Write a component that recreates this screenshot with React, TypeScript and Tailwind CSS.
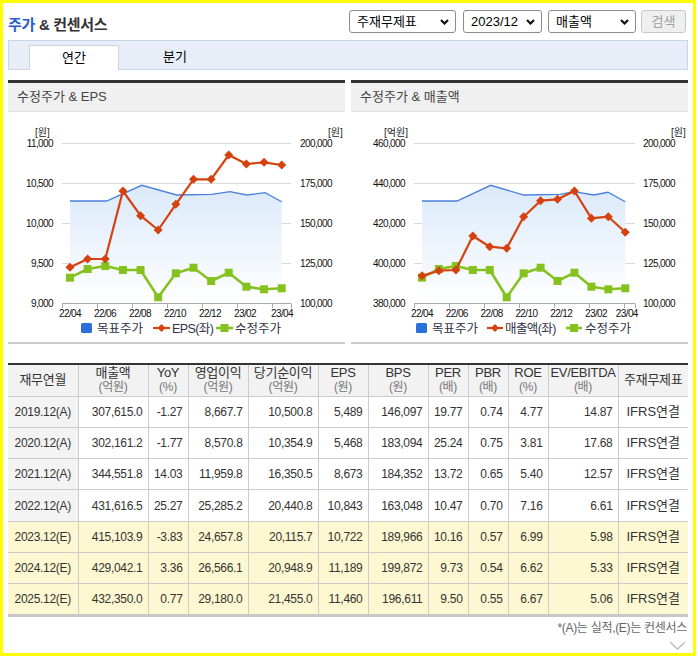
import React from 'react'

type Pt = [number, number]

interface ChartDef {
  ox: number
  plotL: number
  plotR: number
  leftUnit: string
  leftUnitX: number
  leftLabelX: number
  leftLabels: string[]
  rightLabelX: number
  rightUnitX: number
  ticks: number[]
  xLabels: [number, string][]
  red: Pt[]
  green: Pt[]
  blue: Pt[]
  legend: { sq: number; t1: number; r1: number; r2: number; t2: number; g1: number; g2: number; t3: number; redName: string }
}

const GRID = [143.5, 183.5, 223.5, 263.5, 303.5]
const RIGHT_LABELS = ['200,000', '175,000', '150,000', '125,000', '100,000']
const PRICE = [277.7, 269, 266, 270, 270, 297.3, 273.3, 267.7, 281, 272.7, 286.7, 289.3, 288.3]
const DATES = ['22/04', '22/06', '22/08', '22/10', '22/12', '23/02', '23/04']

const leftChart: ChartDef = {
  ox: 8,
  plotL: 62,
  plotR: 291,
  leftUnit: '[원]',
  leftUnitX: 35,
  leftLabelX: 53,
  leftLabels: ['11,000', '10,500', '10,000', '9,500', '9,000'],
  rightLabelX: 300,
  rightUnitX: 328,
  ticks: [62, 97, 132, 167, 202, 237, 272, 291],
  xLabels: DATES.map((d, i) => [70 + i * 35 + (i === 6 ? 2 : 0), d] as [number, string]),
  red: [267.3, 259, 259, 191, 215.7, 230, 204.3, 179.3, 179.3, 155, 164, 162.3, 165].map(
    (y, i) => [70 + i * 17.64, y] as Pt
  ),
  green: PRICE.map((y, i) => [70 + i * 17.64, y] as Pt),
  blue: [
    [70, 201], [106.7, 201], [141.7, 185.3], [176.7, 195], [211.7, 194.3],
    [230, 191.7], [246.7, 195], [265, 192.7], [281.7, 201.7],
  ],
  legend: { sq: 81, t1: 97, r1: 153, r2: 170, t2: 172, redName: 'EPS(좌)', g1: 216, g2: 233, t3: 235 },
}

const rightChart: ChartDef = {
  ox: 351,
  plotL: 414,
  plotR: 635,
  leftUnit: '[억원]',
  leftUnitX: 384,
  leftLabelX: 405,
  leftLabels: ['460,000', '440,000', '420,000', '400,000', '380,000'],
  rightLabelX: 643,
  rightUnitX: 671,
  ticks: [414, 449, 484, 519, 554, 589, 624, 635],
  xLabels: DATES.map((d, i) => [422 + i * 34.8 - (i === 6 ? 4 : 0), d] as [number, string]),
  red: [275.7, 270.7, 270, 236, 246.7, 248.3, 216.7, 200.7, 199.3, 191, 218.3, 216.7, 232.3].map(
    (y, i) => [422 + i * 16.94, y] as Pt
  ),
  green: PRICE.map((y, i) => [422 + i * 16.94, y] as Pt),
  blue: [
    [422, 201], [457, 201], [490.7, 185.3], [523.7, 195], [560.3, 194.3],
    [573.7, 191.7], [593.7, 195], [608, 192.3], [625.3, 201.7],
  ],
  legend: { sq: 416, t1: 432, r1: 487, r2: 503, t2: 505, redName: '매출액(좌)', g1: 566, g2: 582, t3: 585 },
}

const RED = '#d5410f'
const GREEN = '#86c21f'
const BLUE = '#4a80dc'

function Diamond({ x, y, r = 4.5 }: { x: number; y: number; r?: number }) {
  return <polygon points={`${x},${y - r} ${x + r},${y} ${x},${y + r} ${x - r},${y}`} fill={RED} />
}

function Square({ x, y, s = 8 }: { x: number; y: number; s?: number }) {
  return <rect x={x - s / 2} y={y - s / 2} width={s} height={s} fill={GREEN} />
}

function Chart({ c, id }: { c: ChartDef; id: string }) {
  const line = (pts: Pt[]) => pts.map((p) => p.join(',')).join(' ')
  const first = c.blue[0]
  const last = c.blue[c.blue.length - 1]
  const area = `${line(c.blue)} ${last[0]},303 ${first[0]},303`
  const L = c.legend
  return (
    <svg width={337} height={230} viewBox={`${c.ox} 112 337 230`} className="block">
      <defs>
        <linearGradient id={id} x1="0" y1="0" x2="0" y2="1">
          <stop offset="0%" stopColor="#dbe9fa" />
          <stop offset="100%" stopColor="#ffffff" />
        </linearGradient>
      </defs>
      <text x={c.leftUnitX} y={136} fontSize={10} fill="#222">{c.leftUnit}</text>
      <text x={c.rightUnitX} y={136} fontSize={10} fill="#222">[원]</text>
      {GRID.map((g, i) => (
        <g key={g}>
          <line x1={c.plotL} x2={c.plotR} y1={g} y2={g} stroke={i === 4 ? '#a9a9a9' : '#d9d9d9'} />
          <text x={c.leftLabelX} y={g + 3.5} fontSize={10} fill="#111" textAnchor="end" letterSpacing={-0.6}>
            {c.leftLabels[i]}
          </text>
          <text x={c.rightLabelX} y={g + 3.5} fontSize={10} fill="#111" letterSpacing={-0.6}>
            {RIGHT_LABELS[i]}
          </text>
        </g>
      ))}
      {c.ticks.map((t) => (
        <line key={t} x1={t + 0.5} x2={t + 0.5} y1={303.5} y2={308} stroke="#a9a9a9" />
      ))}
      {c.xLabels.map(([x, d]) => (
        <text key={d} x={x} y={317} fontSize={10} fill="#111" textAnchor="middle" letterSpacing={-0.6}>
          {d}
        </text>
      ))}
      <polygon points={area} fill={`url(#${id})`} />
      <polyline points={line(c.blue)} fill="none" stroke={BLUE} strokeWidth={1.3} />
      <polyline points={line(c.green)} fill="none" stroke={GREEN} strokeWidth={2.6} strokeLinejoin="round" />
      {c.green.map(([x, y], i) => (
        <Square key={i} x={x} y={y} />
      ))}
      <polyline points={line(c.red)} fill="none" stroke={RED} strokeWidth={2.2} strokeLinejoin="round" />
      {c.red.map(([x, y], i) => (
        <Diamond key={i} x={x} y={y} />
      ))}
      <rect x={L.sq} y={323} width={11} height={10} rx={1.5} fill="#2a6fdc" />
      <text x={L.t1} y={332.5} fontSize={12.5} fill="#334">목표주가</text>
      <line x1={L.r1} x2={L.r2} y1={328} y2={328} stroke={RED} strokeWidth={2.2} />
      <Diamond x={(L.r1 + L.r2) / 2} y={328} r={4} />
      <text x={L.t2} y={332.5} fontSize={12.5} fill="#334" letterSpacing={-0.6}>{L.redName}</text>
      <line x1={L.g1} x2={L.g2} y1={328} y2={328} stroke={GREEN} strokeWidth={2.6} />
      <Square x={(L.g1 + L.g2) / 2} y={328} s={8} />
      <text x={L.t3} y={332.5} fontSize={12.5} fill="#334">수정주가</text>
    </svg>
  )
}

function Panel({ title, c, id }: { title: string; c: ChartDef; id: string }) {
  return (
    <div className="w-[337px] border-t-[3px] border-[#333] border-b-2 border-b-[#cccccc]">
      <div className="h-[29px] bg-[#f0f0f0] border-b border-[#e2e2e2] flex items-center pl-[9px] text-[13px] text-[#444]">
        {title}
      </div>
      <Chart c={c} id={id} />
    </div>
  )
}

function SelectBox({ label, w }: { label: string; w: string }) {
  return (
    <div className={`${w} h-[23px] border border-[#8c8c8c] rounded-[3px] bg-white flex items-center justify-between pl-[7px] pr-[6px] text-[13px] text-black`}>
      <span>{label}</span>
      <svg width="9" height="6" viewBox="0 0 9 6">
        <polyline points="1,1 4.5,4.5 8,1" fill="none" stroke="#111" strokeWidth="2.2" />
      </svg>
    </div>
  )
}

const COLS = [70, 70, 40, 60, 70, 50, 60, 40, 40, 40, 70, 70]
const HEAD: [string, string?][] = [
  ['재무연월'],
  ['매출액', '(억원)'],
  ['YoY', '(%)'],
  ['영업이익', '(억원)'],
  ['당기순이익', '(억원)'],
  ['EPS', '(원)'],
  ['BPS', '(원)'],
  ['PER', '(배)'],
  ['PBR', '(배)'],
  ['ROE', '(%)'],
  ['EV/EBITDA', '(배)'],
  ['주재무제표'],
]

const ROWS: string[][] = [
  ['2019.12(A)', '307,615.0', '-1.27', '8,667.7', '10,500.8', '5,489', '146,097', '19.77', '0.74', '4.77', '14.87'],
  ['2020.12(A)', '302,161.2', '-1.77', '8,570.8', '10,354.9', '5,468', '183,094', '25.24', '0.75', '3.81', '17.68'],
  ['2021.12(A)', '344,551.8', '14.03', '11,959.8', '16,350.5', '8,673', '184,352', '13.72', '0.65', '5.40', '12.57'],
  ['2022.12(A)', '431,616.5', '25.27', '25,285.2', '20,440.8', '10,843', '163,048', '10.47', '0.70', '7.16', '6.61'],
  ['2023.12(E)', '415,103.9', '-3.83', '24,657.8', '20,115.7', '10,722', '189,966', '10.16', '0.57', '6.99', '5.98'],
  ['2024.12(E)', '429,042.1', '3.36', '26,566.1', '20,948.9', '11,189', '199,872', '9.73', '0.54', '6.62', '5.33'],
  ['2025.12(E)', '432,350.0', '0.77', '29,180.0', '21,455.0', '11,460', '196,611', '9.50', '0.55', '6.67', '5.06'],
]

export default function App() {
  return (
    <div className="w-[696px] h-[656px] border-[3px] border-[#ffff00] bg-white px-[5px] pt-[7px] font-['Liberation_Sans','Noto_Sans_CJK_KR',sans-serif] text-[#333]">
      {/* title + filters */}
      <div className="flex items-start justify-between h-[23px]">
        <h2 className="pt-[6px] text-[15px] leading-[18px] font-bold tracking-[-0.3px]">
          <span className="text-[#2a5fcc]">주가</span> <span className="text-[#333]">&amp; 컨센서스</span>
        </h2>
        <div className="flex items-center pr-[2px]">
          <SelectBox label="주재무제표" w="w-[107px]" />
          <div className="w-[7px]" />
          <SelectBox label="2023/12" w="w-[79px]" />
          <div className="w-[6px]" />
          <SelectBox label="매출액" w="w-[88px]" />
          <button className="ml-[5px] w-[45px] h-[23px] border border-[#c8c8c8] rounded-[3px] bg-[#efefef] text-[13px] text-[#a0a0a0]">
            검색
          </button>
        </div>
      </div>

      {/* tabs */}
      <div className="mt-[7px] h-[30px] bg-[#e8eef8] border border-[#c9d5e6] flex items-end pl-[20px]">
        <div className="w-[90px] h-[25px] -mb-px bg-white border border-b-0 border-[#c9d5e6] flex items-center justify-center text-[13px] text-black">
          연간
        </div>
        <div className="ml-[11px] w-[90px] h-[24px] flex items-center justify-center text-[13px] text-black">
          분기
        </div>
      </div>

      {/* charts */}
      <div className="mt-[10px] flex justify-between">
        <Panel title="수정주가 & EPS" c={leftChart} id="gl" />
        <Panel title="수정주가 & 매출액" c={rightChart} id="gr" />
      </div>

      {/* table */}
      <table className="mt-[19px] w-[680px] table-fixed border-collapse border-t-2 border-t-[#333] border-b-[3px] border-b-[#c8c8c8] text-[12px] tracking-[-0.3px]">
        <colgroup>
          {COLS.map((w, i) => (
            <col key={i} style={{ width: w }} />
          ))}
        </colgroup>
        <thead>
          <tr className="h-[32px] bg-[#f2f2f2]">
            {HEAD.map(([a, b], i) => (
              <th
                key={i}
                className={`font-normal text-center leading-[14px] border-b border-[#cccccc] ${i > 0 ? 'border-l' : ''} border-l-[#cccccc]`}
              >
                <div className="text-[13px] text-[#333]">{a}</div>
                {b && <div className="text-[12px] text-[#777]">{b}</div>}
              </th>
            ))}
          </tr>
        </thead>
        <tbody>
          {ROWS.map((r) => {
            const est = r[0].endsWith('(E)')
            return (
              <tr key={r[0]} className={`h-[31.3px] ${est ? 'bg-[#fdf8d1]' : 'bg-white'}`}>
                {r.map((v, i) => (
                  <td
                    key={i}
                    className={`border-b border-[#cccccc] ${i > 0 ? 'border-l border-l-[#cccccc] text-right pr-[5px]' : 'text-center'} ${i === 0 && !est ? 'bg-[#f3f3f3]' : ''}`}
                  >
                    {v}
                  </td>
                ))}
                <td className="border-b border-l border-[#cccccc] text-center text-[13px] tracking-normal">IFRS연결</td>
              </tr>
            )
          })}
        </tbody>
      </table>

      <div className="mt-[2px] text-right text-[12px] text-[#666] tracking-[-0.3px] pr-[1px]">*(A)는 실적,(E)는 컨센서스</div>
      <div className="flex justify-end pr-[2px] mt-[4px]">
        <svg width="17" height="9" viewBox="0 0 17 9">
          <polyline points="1,1 8.5,8 16,1" fill="none" stroke="#bbbbbb" strokeWidth="1.3" />
        </svg>
      </div>
    </div>
  )
}
